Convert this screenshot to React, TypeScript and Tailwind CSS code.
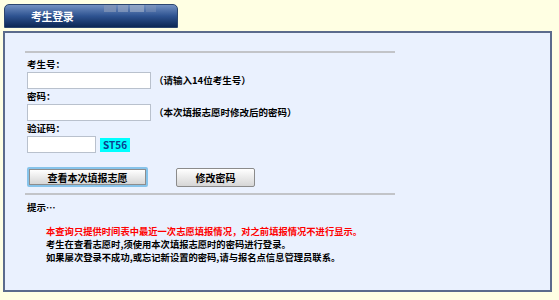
import React from "react";

const font = { fontFamily: '"Noto Sans CJK SC", "Noto Sans", sans-serif' };

export default function App() {
  return (
    <div
      className="w-[559px] h-[300px] bg-[#FFFFE3] pt-[4px] pl-[3px] overflow-hidden"
      style={font}
    >
      {/* Tab */}
      <div className="relative ml-[1px] w-[174px] h-[24px] rounded-t-[5px] bg-gradient-to-b from-[#7391c2] via-[#2e5391] to-[#0d2855] flex items-center pl-[26px] border border-[#2c466f]">
        <div className="absolute top-0 left-[99px] flex gap-[2px]">
          <div className="w-[12px] h-[7px] bg-[#8798b8] opacity-70" />
          <div className="w-[10px] h-[7px] bg-[#9aa9c4] opacity-60" />
          <div className="w-[14px] h-[7px] bg-[#a8b6cc] opacity-60" />
          <div className="w-[10px] h-[7px] bg-[#8a9cbc] opacity-40" />
        </div>
        <span className="text-white text-[11px] font-bold leading-none tracking-[-0.4px]">
          考生登录
        </span>
      </div>

      {/* Box */}
      <div className="mt-[3px] w-[549px] h-[261px] border-2 border-[#5b6b8c] bg-[#EAF1FE] pl-[20px] pt-[18px]">
        <div className="w-[370px] h-[2px] bg-[#c2c4c8]" />

        <div className="mt-[4px] ml-[2px] text-[9.5px] font-bold text-black">
          <div className="h-[15px] leading-[15px]">考生号：</div>
          <div className="flex items-center h-[17px]">
            <div className="w-[124px] h-[17px] bg-white border border-[#b9c1cd]" />
            <span className="ml-[3px]">（请输入14位考生号）</span>
          </div>
          <div className="h-[15px] leading-[15px]">密码：</div>
          <div className="flex items-center h-[17px]">
            <div className="w-[124px] h-[17px] bg-white border border-[#b9c1cd]" />
            <span className="ml-[3px]">（本次填报志愿时修改后的密码）</span>
          </div>
          <div className="h-[15px] leading-[15px]">验证码：</div>
          <div className="flex items-center h-[17px]">
            <div className="w-[69px] h-[17px] bg-white border border-[#b9c1cd]" />
            <span className="ml-[4px] h-[14px] leading-[14px] px-[3px] bg-[#00ffff] text-[#0b3c8f] text-[10px]">
              ST56
            </span>
          </div>

          <div className="mt-[14px] flex items-start">
            <div className="w-[121px] h-[20px] border-2 border-[#86c3ea] rounded-[2px]">
              <div className="w-full h-full border border-[#8d8d8d] bg-gradient-to-b from-[#ffffff] to-[#d6d6d6] flex items-center justify-center text-[10px]">
                查看本次填报志愿
              </div>
            </div>
            <div className="ml-[28px] mt-[1px] w-[79px] h-[19px] border border-[#8b8b8b] rounded-[2px] bg-gradient-to-b from-[#ffffff] to-[#d6d6d6] flex items-center justify-center text-[10px]">
              修改密码
            </div>
          </div>
        </div>

        <div className="mt-[6px] w-[370px] h-[2px] bg-[#c2c4c8]" />

        <div className="mt-[5px] ml-[2px] h-[14px] leading-[14px] text-[9.5px] font-bold text-black">
          提示…
        </div>

        <div className="mt-[11px] ml-[21px] text-[9.3px] font-bold leading-[13px]">
          <div className="text-[#ff0000]">
            本查询只提供时间表中最近一次志愿填报情况，对之前填报情况不进行显示。
          </div>
          <div className="text-black">
            考生在查看志愿时,须使用本次填报志愿时的密码进行登录。
          </div>
          <div className="text-black">
            如果屡次登录不成功,或忘记新设置的密码,请与报名点信息管理员联系。
          </div>
        </div>
      </div>
    </div>
  );
}
